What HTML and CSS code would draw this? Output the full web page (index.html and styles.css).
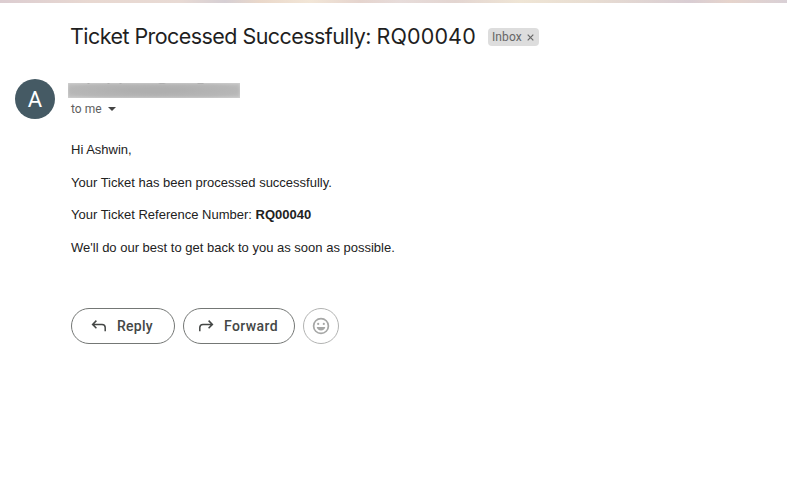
FILE: index.html
```html
<!DOCTYPE html>
<html lang="en">
<head>
<meta charset="utf-8">
<title>Ticket Processed Successfully: RQ00040</title>
<link rel="stylesheet" href="styles.css">
</head>
<body>
<div class="theme-strip"></div>
<main class="mail">
  <header class="subject">
    <h1>Ticket Processed Successfully: <span class="ref">RQ00040</span></h1>
    <span class="label">Inbox
      <svg width="7" height="7" viewBox="0 0 7 7"><path d="M.7.7l5.6 5.6M6.3.7L.7 6.3" stroke="#666" stroke-width="1.2"/></svg>
    </span>
  </header>
  <section class="sender">
    <div class="avatar">A</div>
    <div class="details">
      <div class="redacted"></div>
      <div class="recipient"><span>to me</span><i class="caret"></i></div>
    </div>
  </section>
  <article class="message">
    <p>Hi Ashwin,</p>
    <p>Your Ticket has been processed successfully.</p>
    <p>Your Ticket Reference Number: <b>RQ00040</b></p>
    <p>We'll do our best to get back to you as soon as possible.</p>
  </article>
  <footer class="actions">
    <button class="reply"><svg width="20" height="20" viewBox="0 0 20 20"><path d="M7.4 4.6L3.6 8.4l3.8 3.8M3.8 8.4H13q3.2 0 3.2 3.2v3.7"/></svg><span>Reply</span></button>
    <button class="forward"><svg width="20" height="20" viewBox="0 0 20 20"><path d="M12.6 4.6l3.8 3.8-3.8 3.8M16.2 8.4H7q-3.2 0-3.2 3.2v3.7"/></svg><span>Forward</span></button>
    <button class="emoji" aria-label="Add reaction"><svg width="20" height="20" viewBox="0 0 20 20"><circle class="face" cx="10" cy="10" r="7.4"/><circle class="feature" cx="7.2" cy="7.9" r="1.1"/><circle class="feature" cx="12.8" cy="7.9" r="1.1"/><path class="feature" d="M5.7 11h8.6a4.4 4.4 0 0 1-8.6 0z"/></svg></button>
  </footer>
</main>
</body>
</html>
```
FILE: styles.css
```css
* { box-sizing: border-box; }
body { margin: 0; background: #fff; color: #1f1f1f; font-family: Roboto, sans-serif; }
.theme-strip {
  height: 3px;
  background: linear-gradient(90deg, #dccdd1 0, #e8d8d1 90px, #e8dad4 180px, #d6cfd4 225px, #ead8ca 260px, #f2e6d7 310px, #e5d4ce 360px, #e7dcda 400px, #e3d5d1 455px, #efe5d5 520px, #e8ddd2 590px, #d9cdd3 690px, #e6d4cc 730px, #d9d0d6 787px);
}
.mail { padding-left: 71px; }
.subject { display: flex; align-items: center; height: 68px; }
h1 { margin: -2px 0 0 -1px; width: 418px; font: 400 21.5px/28px Inter, sans-serif; letter-spacing: -0.56px; white-space: nowrap; }
.ref { letter-spacing: 0.15px; }
.label { display: flex; align-items: center; gap: 5px; width: 51px; height: 18px; padding-left: 4px; border-radius: 4px; background: #ddd; color: #666; font-size: 12px; letter-spacing: 0.1px; }
.label svg { margin-top: 1px; }
.sender { display: flex; margin-left: -56px; padding-top: 8px; }
.avatar { width: 40px; height: 40px; border-radius: 50%; background: #455a64; color: #fff; font-size: 22px; line-height: 41px; text-align: center; }
.details { margin-left: 13px; padding-top: 4px; }
.redacted {
  width: 172px;
  height: 15px;
  background:
    linear-gradient(90deg, transparent 19px, #999 20px 21px, transparent 22px 39px, #999 40px 41px, transparent 42px 51px, #999 52px 53px, transparent 54px 90px, #999 92px 96px, transparent 98px 129px, #999 130px 135px, transparent 136px) 0 0 / 100% 1px no-repeat,
    radial-gradient(ellipse at center, #afafaf 20%, #b7b7b7 70%, #c4c4c4);
  box-shadow: inset 0 0 3px #d6d6d6;
}
.recipient { display: flex; align-items: center; gap: 6px; height: 22px; padding-left: 3px; color: #5e5e5e; font-size: 12px; letter-spacing: 0.05px; }
.caret { border: 4px solid transparent; border-top-color: #444; border-bottom: 0; }
.message { margin-top: 20px; color: #222; font: 13px/19.5px "Liberation Sans", sans-serif; }
.message p { margin: 0 0 13px; }
.actions { display: flex; gap: 8px; margin-top: 51px; }
button { display: flex; align-items: center; height: 36px; padding: 0 0 0 17px; border: 1px solid #747775; border-radius: 18px; background: #fff; color: #444746; font: 500 14px/20px Roboto, sans-serif; }
button svg { fill: none; stroke: #444746; stroke-width: 1.5; }
.reply { width: 104px; }
.reply span { margin-left: 8px; letter-spacing: 0.25px; }
.forward { width: 112px; padding-left: 12px; }
.forward span { margin-left: 8px; letter-spacing: 0.4px; }
.emoji { width: 36px; padding: 0; justify-content: center; border-color: #b2b3b2; }
.face { stroke: #a6a7a6; stroke-width: 1.7; }
.feature { fill: #a6a7a6; stroke: none; }
```
